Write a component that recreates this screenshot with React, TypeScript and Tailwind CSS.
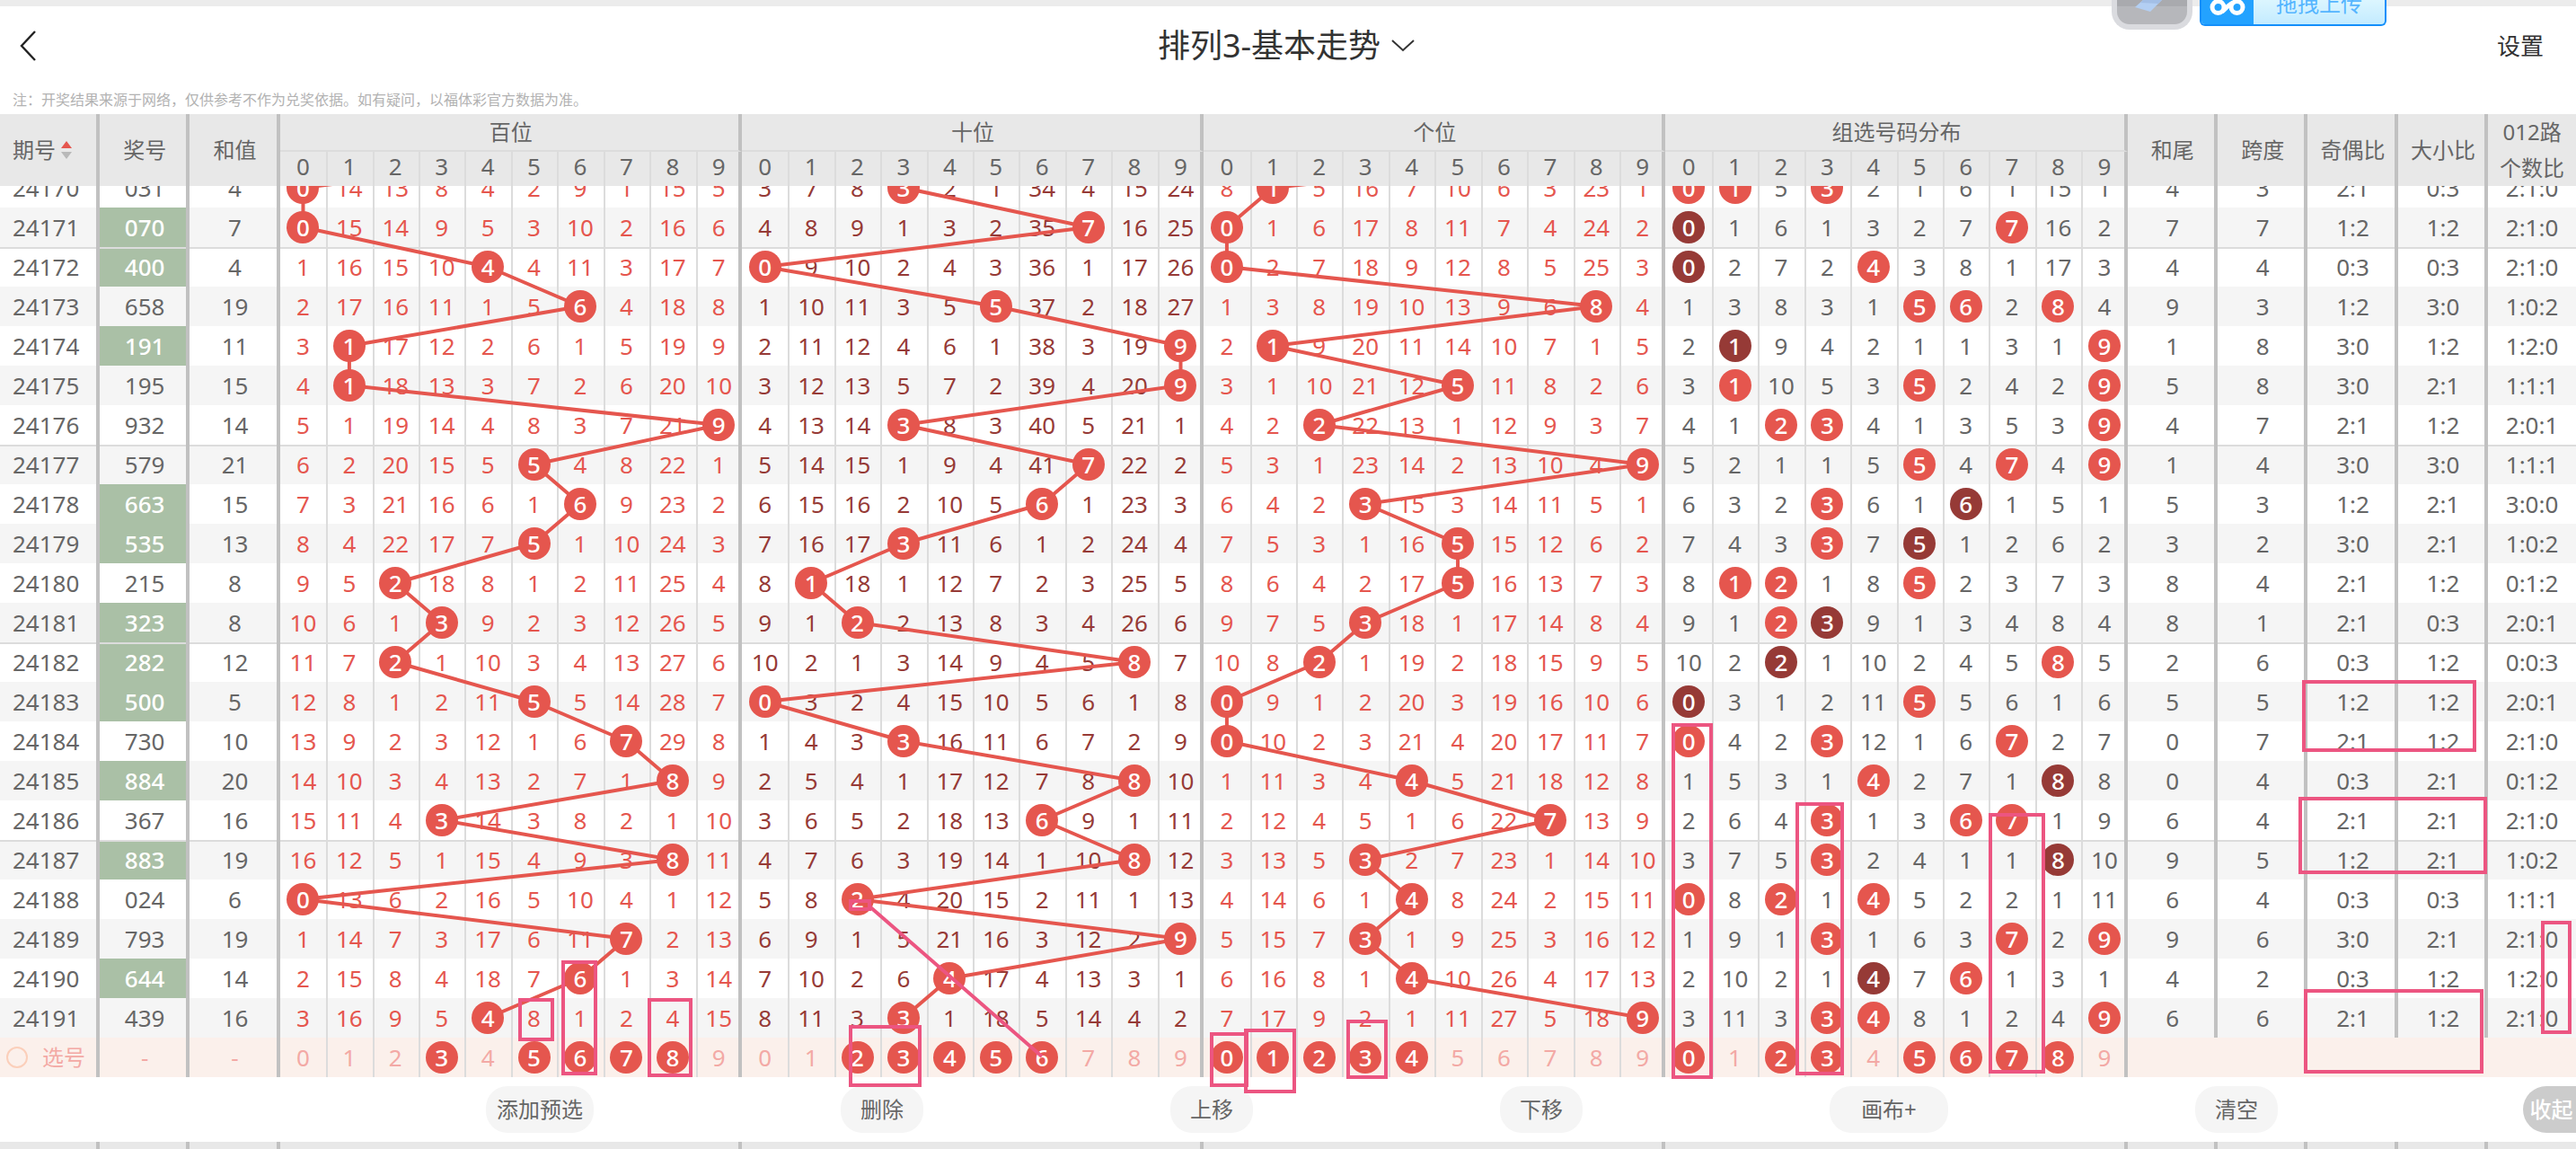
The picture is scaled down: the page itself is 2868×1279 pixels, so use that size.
import { clsx } from 'clsx';

const FIRST_ISSUE = 24170;

const draws = [
  '031', '070', '400', '658', '191', '195', '932', '579', '663', '535', '215',
  '323', '282', '500', '730', '884', '367', '883', '024', '793', '644', '439',
];

// the draw just above the first row, only its trend line shows
const previousDraw = '759';

const digits = [0, 1, 2, 3, 4, 5, 6, 7, 8, 9];

// rounds since each digit last came up, as of the first row
const groups = [
  { name: '百位', tone: 'text-[#e5564e]', start: [0, 14, 13, 8, 4, 2, 9, 1, 15, 5], picks: [3, 5, 6, 7, 8] },
  { name: '十位', tone: 'text-[#963a36]', start: [3, 7, 8, 0, 2, 1, 34, 4, 15, 24], picks: [2, 3, 4, 5, 6] },
  { name: '个位', tone: 'text-[#e5564e]', start: [8, 0, 5, 16, 7, 10, 6, 3, 23, 1], picks: [0, 1, 2, 3, 4] },
  { name: '组选号码分布', tone: 'text-[#666666]', start: [0, 0, 5, 0, 2, 1, 6, 1, 15, 1], picks: [0, 2, 3, 5, 6, 7, 8] },
];

const tailColumns = ['和尾', '跨度', '奇偶比', '大小比'];

const tools = [
  { label: '添加预选', width: 'w-[120px]' },
  { label: '删除', width: 'w-[92px]' },
  { label: '上移', width: 'w-[92px]' },
  { label: '下移', width: 'w-[92px]' },
  { label: '画布+', width: 'w-[132px]' },
  { label: '清空', width: 'w-[92px]' },
];

// hand-drawn marks on the canvas: left, top, right, bottom
const marks = [
  [625, 862, 665, 990],
  [577, 904, 617, 952],
  [721, 904, 771, 992],
  [945, 934, 1026, 1003],
  [945, 794, 970, 807],
  [1347, 942, 1390, 1003],
  [1385, 938, 1443, 1010],
  [1499, 928, 1545, 994],
  [1861, 598, 1907, 994],
  [1999, 686, 2053, 990],
  [2214, 698, 2277, 988],
  [2563, 550, 2757, 630],
  [2559, 680, 2769, 766],
  [2565, 894, 2765, 988],
  [2829, 818, 2863, 944],
];

// wide columns: left padding balances the thick right border
const side = 'border-r-4 border-[#c1c1c1] pl-1';

function hitsOf(draw: string, group: number) {
  const nums = draw.split('').map(Number);
  return group < 3 ? [nums[group]] : nums;
}

const rows = (() => {
  let miss = groups.map((g) => g.start);
  return draws.map((draw, i) => {
    if (i > 0) {
      miss = miss.map((counts, g) =>
        counts.map((c, d) => (hitsOf(draw, g).includes(d) ? 0 : c + 1))
      );
    }
    const nums = draw.split('').map(Number);
    const sum = nums[0] + nums[1] + nums[2];
    const odd = nums.filter((n) => n % 2 === 1).length;
    const big = nums.filter((n) => n >= 5).length;
    const road = [0, 1, 2].map((r) => nums.filter((n) => n % 3 === r).length);
    return {
      issue: FIRST_ISSUE + i,
      draw,
      nums,
      sum,
      miss,
      pair: new Set(nums).size < 3,
      stats: [
        String(sum % 10),
        String(Math.max(...nums) - Math.min(...nums)),
        `${odd}:${3 - odd}`,
        `${big}:${3 - big}`,
        road.join(':'),
      ],
    };
  });
})();

function Columns() {
  return (
    <colgroup>
      <col className="w-[3.87%]" />
      <col className="w-[3.5%]" />
      <col className="w-[3.5%]" />
      {groups.map((g) => digits.map((d) => <col key={g.name + d} className="w-[1.793%]" />))}
      {tailColumns.map((name) => (
        <col key={name} className="w-[3.5%]" />
      ))}
      <col />
    </colgroup>
  );
}

function digitCell(d: number) {
  if (d === 0) return 'p-0';
  return clsx(
    'border-l-2 border-l-[#dcdcdc] py-0',
    d === 9 ? 'border-r-4 border-r-[#c1c1c1] pr-0 pl-0.5' : 'pr-0.5 pl-0'
  );
}

function Ball({ value, dark }: { value: number; dark?: boolean }) {
  return (
    <span
      className={clsx(
        'relative z-10 mx-auto flex size-9 items-center justify-center rounded-full font-medium text-white',
        dark ? 'bg-[#963a36]' : 'bg-[#e5564e]'
      )}
    >
      {value}
    </span>
  );
}

function TopBar() {
  return (
    <header className="relative border-t-[7px] border-[#ececec]">
      <div className="grid h-[88px] grid-cols-[1fr_auto_1fr] items-center text-[#333333]">
        <button type="button" aria-label="返回" className="ml-5 flex h-10 w-8 items-center">
          <svg width="22" height="36" viewBox="0 0 22 36" fill="none" stroke="#222222" strokeWidth="2.4">
            <path d="M19 2 L4 18 L19 34" />
          </svg>
        </button>
        <button type="button" className="flex items-center gap-3 pr-1 text-4xl">
          <h1>排列3-基本走势</h1>
          <svg width="26" height="14" viewBox="0 0 26 14" fill="none" stroke="#333333" strokeWidth="2">
            <path d="M1 1 L13 12 L25 1" />
          </svg>
        </button>
        <button type="button" className="mr-9 justify-self-end text-[26px]">设置</button>
      </div>
      <p className="flex h-8 items-center pl-[14px] text-base text-[#b2b2b2]">
        注：开奖结果来源于网络，仅供参考不作为兑奖依据。如有疑问，以福体彩官方数据为准。
      </p>
      <UploadWidget />
    </header>
  );
}

function UploadWidget() {
  return (
    <div className="absolute -top-[7px] right-[211px] flex items-start gap-2">
      <div className="h-[33px] w-[90px] overflow-hidden rounded-b-[20px] border-x-[6px] border-b-[6px] border-[#dadbdf] bg-[#b6b7bb]">
        <svg width="78" height="27" viewBox="0 0 78 27">
          <rect width="78" height="7" fill="#a9aaae" />
          <path d="M29 0 L20 8 L37 13 L50 0 Z" fill="#b3cff3" />
          <path d="M29 0 L26 3 L46 4 L50 0 Z" fill="#a3bfe6" />
        </svg>
      </div>
      <button
        type="button"
        className="flex h-[29px] w-[208px] overflow-hidden rounded-b-md border-x-2 border-b-2 border-[#148ffa] bg-linear-to-b from-[#dcf6ff] to-[#c3ebff] text-2xl text-[#55b5ff]"
      >
        <span className="h-full w-[58px] bg-[#23a2ff]">
          <svg width="58" height="27" viewBox="0 0 58 27" fill="none" stroke="#ffffff" strokeWidth="5">
            <circle cx="18.500" cy="8" r="6.500" />
            <circle cx="39.500" cy="8" r="6.500" />
            <path d="M23 13 C27 10 30 5 35 3" />
          </svg>
        </span>
        <span className="flex-1 leading-[8px]">拖拽上传</span>
      </button>
    </div>
  );
}

function TableHead() {
  return (
    <table className="w-full table-fixed border-separate border-spacing-0 bg-[#e8e8e8] text-2xl text-[#666666]">
      <Columns />
      <thead>
        <tr className="h-[42px]">
          <th rowSpan={2} className={clsx(side, 'py-0 pr-0 font-normal')}>
            <button type="button" className="flex items-center gap-[6px] pl-[10px]">
              期号
              <svg width="12" height="20" viewBox="0 0 12 20">
                <path d="M6 0 L12 8 H0 Z" fill="#e5564e" />
                <path d="M6 20 L12 12 H0 Z" fill="#b9b9b9" />
              </svg>
            </button>
          </th>
          <th rowSpan={2} className={clsx(side, 'py-0 pr-0 font-normal')}>奖号</th>
          <th rowSpan={2} className={clsx(side, 'py-0 pr-0 font-normal')}>和值</th>
          {groups.map((g) => (
            <th
              key={g.name}
              colSpan={10}
              className="border-r-4 border-b-2 border-r-[#c1c1c1] border-b-[#dcdcdc] py-0 pr-0 pl-1 leading-9 font-normal"
            >
              {g.name}
            </th>
          ))}
          {tailColumns.map((name) => (
            <th key={name} rowSpan={2} className={clsx(side, 'py-0 pr-0 font-normal')}>{name}</th>
          ))}
          <th rowSpan={2} className="p-0 font-normal">
            <span className="block leading-10">012路</span>
            <span className="block leading-10">个数比</span>
          </th>
        </tr>
        <tr className="h-[38px] text-[26px] leading-8">
          {groups.map((g) =>
            digits.map((d) => (
              <th key={g.name + d} className={clsx(digitCell(d), 'align-top font-normal')}>{d}</th>
            ))
          )}
        </tr>
      </thead>
    </table>
  );
}

function TrendLines() {
  const left = 3.87 + 3.5 * 2;
  const all = [previousDraw, ...draws];
  return (
    <svg className="pointer-events-none absolute inset-0 h-full w-full" stroke="#e5564e" strokeWidth="4">
      {[0, 1, 2].map((g) =>
        all.slice(1).map((draw, i) => {
          const x = (n: string) => `${left + g * 17.93 + (Number(n) + 0.5) * 1.793}%`;
          return (
            <line key={`${g}-${i}`} x1={x(all[i][g])} y1={i * 44 - 22} x2={x(draw[g])} y2={i * 44 + 22} />
          );
        })
      )}
    </svg>
  );
}

function TableBody() {
  return (
    <div className="overflow-hidden">
      <div className="relative isolate -mt-5">
        <table className="w-full table-fixed border-separate border-spacing-0 text-center text-[26px] leading-[34px] text-[#666666]">
          <Columns />
          <tbody>
            {rows.map((row, i) => {
              const line = i % 5 === 2 && 'shadow-[inset_0_2px_0_#dcdcdc]';
              return (
                <tr key={row.issue} className={clsx('h-11', i % 2 ? 'bg-[#f5f5f5]' : 'bg-white')}>
                  <td className={clsx('border-r-4 border-[#c1c1c1] py-0 pr-0 pl-[14px] text-left', line)}>
                    {row.issue}
                  </td>
                  <td className={clsx(side, line, 'py-0 pr-0', row.pair && 'bg-[#aac0a6] font-medium text-white')}>
                    {row.draw}
                  </td>
                  <td className={clsx(side, line, 'py-0 pr-0')}>{row.sum}</td>
                  {groups.map((g, gi) =>
                    digits.map((d) => (
                      <td key={g.name + d} className={clsx(digitCell(d), line, g.tone)}>
                        {row.miss[gi][d] === 0 ? (
                          <Ball value={d} dark={gi === 3 && row.nums.filter((n) => n === d).length > 1} />
                        ) : (
                          row.miss[gi][d]
                        )}
                      </td>
                    ))
                  )}
                  {row.stats.map((s, si) => (
                    <td key={si} className={clsx(si < 4 ? side : 'pl-0', line, 'py-0 pr-0')}>{s}</td>
                  ))}
                </tr>
              );
            })}
            <tr className="h-11 bg-[#fbf0eb] text-[#f3a9a5]">
              <td className="border-r-4 border-[#c1c1c1] p-0">
                <label className="flex items-center gap-4 pl-[7px] text-2xl">
                  <input type="radio" name="pick" className="size-6 appearance-none rounded-full border-2 border-[#fbcfba]" />
                  选号
                </label>
              </td>
              <td className={clsx(side, 'py-0 pr-0')}>-</td>
              <td className={clsx(side, 'py-0 pr-0')}>-</td>
              {groups.map((g) =>
                digits.map((d) => (
                  <td key={g.name + d} className={digitCell(d)}>
                    <button type="button" className="block w-full">
                      {g.picks.includes(d) ? <Ball value={d} /> : d}
                    </button>
                  </td>
                ))
              )}
              <td colSpan={5} className="p-0" />
            </tr>
          </tbody>
        </table>
        <TrendLines />
      </div>
    </div>
  );
}

function Toolbar() {
  return (
    <div className="relative flex h-[72px] items-center justify-evenly pr-[57px] pl-[266px] text-2xl text-[#666666]">
      {tools.map((t) => (
        <button key={t.label} type="button" className={clsx('h-[52px] rounded-3xl bg-[#f5f5f5]', t.width)}>
          {t.label}
        </button>
      ))}
      <button
        type="button"
        className="absolute right-0 h-[52px] w-[59px] rounded-l-full bg-[#cccccc] pl-1 font-medium text-white"
      >
        收起
      </button>
    </div>
  );
}

function Marks() {
  return (
    <svg
      className="pointer-events-none absolute inset-0 z-20 h-full w-full"
      viewBox="0 0 2868 1064"
      preserveAspectRatio="none"
      fill="none"
      stroke="#ec5581"
      strokeWidth="4"
    >
      {marks.map(([x1, y1, x2, y2]) => (
        <rect key={`${x1}-${y1}`} x={x1 + 2} y={y1 + 2} width={x2 - x1 - 4} height={y2 - y1 - 4} />
      ))}
      <path d="M967 801 L1160 969" />
    </svg>
  );
}

function NextTableEdge() {
  return (
    <div className="flex h-2 bg-[#e8e8e8]">
      <div className={clsx(side, 'w-[3.87%]')} />
      <div className={clsx(side, 'w-[3.5%]')} />
      <div className={clsx(side, 'w-[3.5%]')} />
      {groups.map((g) => (
        <div key={g.name} className={clsx(side, 'w-[17.93%]')} />
      ))}
      {tailColumns.map((name) => (
        <div key={name} className={clsx(side, 'w-[3.5%]')} />
      ))}
    </div>
  );
}

export default function App() {
  return (
    <main className="overflow-hidden bg-white font-['Noto_Sans','Noto_Sans_CJK_SC',sans-serif]">
      <TopBar />
      <TableHead />
      <div className="relative">
        <TableBody />
        <Toolbar />
        <Marks />
      </div>
      <NextTableEdge />
    </main>
  );
}
